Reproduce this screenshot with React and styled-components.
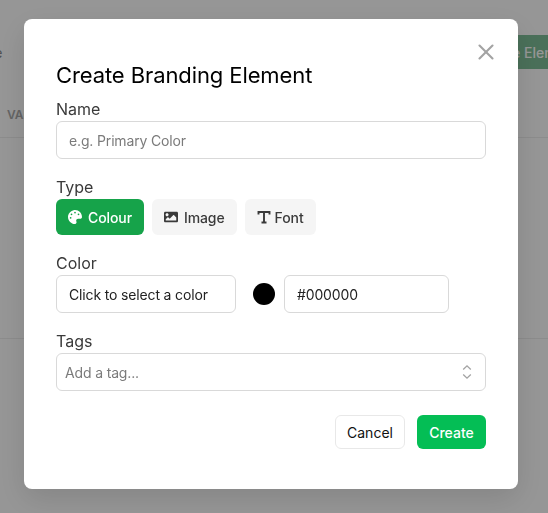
import React from 'react'
import styled, { createGlobalStyle } from 'styled-components'
import { FaPalette, FaImage } from 'react-icons/fa'
import { LuX } from 'react-icons/lu'

const GlobalStyle = createGlobalStyle`
    html, body {
        margin: 0;
        height: 100%;
        overflow: hidden;
    }
    body {
        font-family: Inter, "Liberation Sans", sans-serif;
        color: #111;
    }
`

function FontIcon() {
  return (
    <svg width="14" height="14" viewBox="0 0 14 14" fill="none" stroke="currentColor" strokeWidth="1.9">
      <path d="M1.5 4.5V2h11v2.5M7 2v10.5M4.5 12.5h5" />
    </svg>
  )
}

function UpDownIcon() {
  return (
    <svg width="10" height="16" viewBox="0 0 10 16" fill="none" stroke="#a3a3a3" strokeWidth="1.3">
      <path d="M1.2 5.5 5 1.8l3.8 3.7M1.2 10.5 5 14.2l3.8-3.7" />
    </svg>
  )
}

function App() {
  return (
    <>
      <GlobalStyle />
      <Page>
        <PageHeader>
          <PageTitle>Branding Table</PageTitle>
          <CreateLink>Create Element</CreateLink>
        </PageHeader>
        <TableHead>VALUE</TableHead>
        <TableBody />
      </Page>
      <Overlay>
        <Modal>
          <CloseButton aria-label="Close"><LuX size={26} strokeWidth={1.9} /></CloseButton>
          <Title>Create Branding Element</Title>

          <Label>Name</Label>
          <Input placeholder="e.g. Primary Color" />

          <Section>
            <Label>Type</Label>
            <TypeRow>
              <TypeButton $active><FaPalette size={14} /> Colour</TypeButton>
              <TypeButton><FaImage size={14} /> Image</TypeButton>
              <TypeButton $tight><FontIcon /> Font</TypeButton>
            </TypeRow>
          </Section>

          <Section>
            <Label>Color</Label>
            <ColorRow>
              <PickerButton>Click to select a color</PickerButton>
              <Swatch />
              <HexInput defaultValue="#000000" />
            </ColorRow>
          </Section>

          <Section>
            <Label>Tags</Label>
            <TagsBox>
              <span>Add a tag...</span>
              <UpDownIcon />
            </TagsBox>
          </Section>

          <Footer>
            <CancelButton>Cancel</CancelButton>
            <CreateButton>Create</CreateButton>
          </Footer>
        </Modal>
      </Overlay>
    </>
  )
}

const Page = styled.div`
    height: 513px;
    background: #fff;
    overflow: hidden;
`
const PageHeader = styled.div`
    display: flex;
    justify-content: space-between;
    align-items: center;
    height: 34px;
    margin-top: 35px;
    margin-left: -97px;
    margin-right: -46px;
`
const PageTitle = styled.div`
    font-size: 14px;
    color: #888;
`
const CreateLink = styled.div`
    height: 34px;
    padding: 0 16px;
    display: flex;
    align-items: center;
    background: #7fbf98;
    color: #fff;
    font-size: 14px;
    font-weight: 500;
    border-radius: 4px;
`
const TableHead = styled.div`
    margin-top: 37px;
    padding: 0 0 13px 7px;
    height: 18px;
    line-height: 18px;
    font-size: 12px;
    font-weight: 600;
    color: #aaa;
    border-bottom: 1px solid #eee;
`
const TableBody = styled.div`
    height: 200px;
    border-bottom: 1px solid #eee;
`
const Overlay = styled.div`
    position: fixed;
    inset: 0;
    background: rgba(0, 0, 0, 0.41);
`
const Modal = styled.div`
    position: absolute;
    left: 24px;
    top: 19px;
    width: 494px;
    height: 470px;
    box-sizing: border-box;
    padding: 44px 32px 0;
    background: #fff;
    border-radius: 8px;
    box-shadow: 0 10px 30px rgba(0, 0, 0, 0.12);
`
const CloseButton = styled.button`
    position: absolute;
    top: 20px;
    right: 19px;
    width: 26px;
    height: 26px;
    padding: 0;
    border: 0;
    background: none;
    color: #a3a3a3;
`
const Title = styled.h2`
    margin: 0 0 11px;
    font-size: 22px;
    line-height: 24px;
    font-weight: 400;
    letter-spacing: -0.1px;
    color: #000;
`
const Label = styled.div`
    font-size: 16px;
    line-height: 22px;
    color: #3a3a3a;
    margin-bottom: 1px;
`
const fieldStyle = `
    box-sizing: border-box;
    height: 38px;
    background: #fff;
    border: 1px solid #d9d9d9;
    border-radius: 6px;
    font-family: inherit;
    font-size: 14px;
    letter-spacing: -0.15px;
    color: #222;
`
const Input = styled.input`
    ${fieldStyle}
    display: block;
    width: 100%;
    padding: 0 12px;
    outline: none;
    &::placeholder {
        color: #7b7b7b;
    }
`
const Section = styled.div`
    margin-top: 17px;
`
const TypeRow = styled.div`
    display: flex;
    gap: 8px;
`
const TypeButton = styled.button`
    display: flex;
    align-items: center;
    gap: ${props => (props.$tight ? '4px' : '6px')};
    height: 36px;
    padding: 0 12px;
    border: 0;
    border-radius: 6px;
    font-family: inherit;
    font-size: 14px;
    font-weight: 500;
    letter-spacing: -0.1px;
    background: ${props => (props.$active ? '#16a34a' : '#f5f5f5')};
    color: ${props => (props.$active ? '#fff' : '#3a3a3a')};
`
const ColorRow = styled.div`
    display: flex;
    align-items: center;
`
const PickerButton = styled.button`
    ${fieldStyle}
    width: 180px;
    padding: 0 12px;
    text-align: left;
`
const Swatch = styled.div`
    width: 22px;
    height: 22px;
    margin: 0 9px 0 17px;
    border-radius: 50%;
    background: #000;
`
const HexInput = styled.input`
    ${fieldStyle}
    width: 165px;
    padding: 0 12px;
    outline: none;
`
const TagsBox = styled.div`
    ${fieldStyle}
    display: flex;
    align-items: center;
    justify-content: space-between;
    padding: 0 13px 0 8px;
    color: #7b7b7b;
`
const Footer = styled.div`
    display: flex;
    justify-content: flex-end;
    gap: 12px;
    margin-top: 24px;
`
const CancelButton = styled.button`
    height: 34px;
    width: 70px;
    background: #fff;
    border: 1px solid #e8e8e8;
    border-radius: 6px;
    font-family: inherit;
    font-size: 14px;
    color: #111;
`
const CreateButton = styled.button`
    height: 34px;
    width: 69px;
    background: #04be55;
    border: 0;
    border-radius: 6px;
    font-family: inherit;
    font-size: 14px;
    font-weight: 500;
    color: #fff;
`

export default App
